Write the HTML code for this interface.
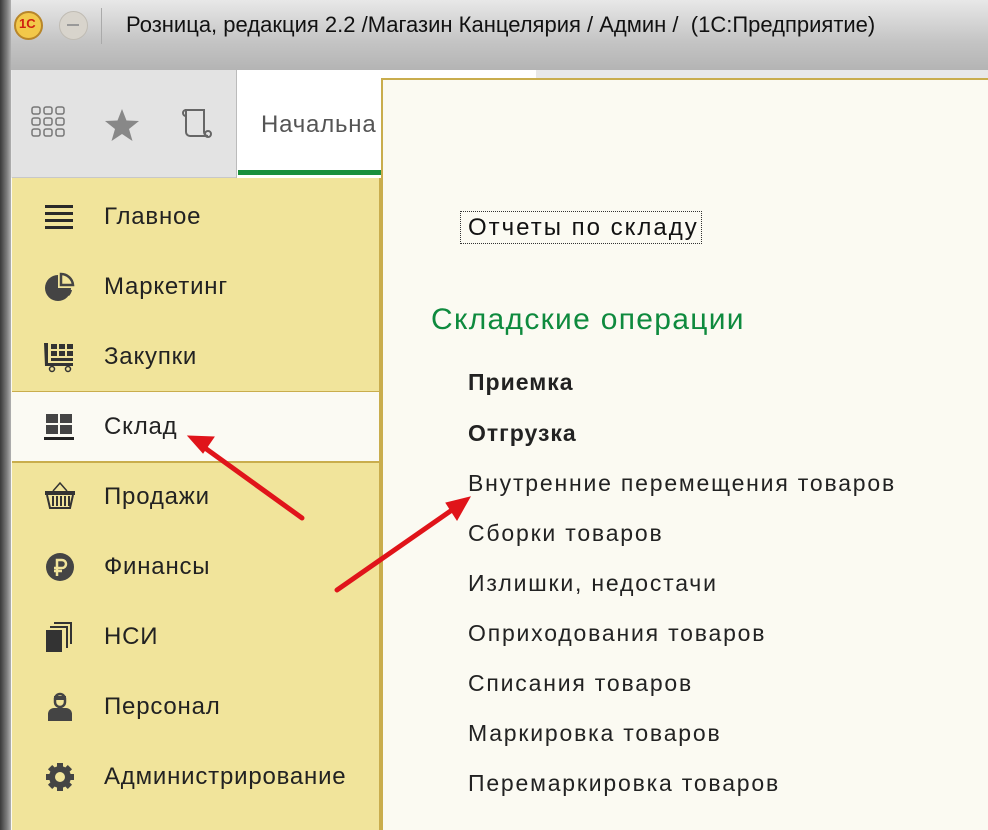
<!DOCTYPE html>
<html><head><meta charset="utf-8"><style>
*{margin:0;padding:0;box-sizing:border-box}
body{width:988px;height:830px;overflow:hidden;background:#fbfaf2;font-family:"Liberation Sans","DejaVu Sans",sans-serif;position:relative}
.abs{position:absolute}
#title{left:0;top:0;width:988px;height:70px;background:linear-gradient(#e8e8e8,#c4c4c4 60%,#b4b4b4)}
#ledge{left:0;top:0;width:11px;height:830px;background:linear-gradient(90deg,#3a3a3a,#7a7a7a 60%,#b0b0b0)}
.t{font-size:22px;color:#111;white-space:nowrap}
.side{left:12px;top:178px;width:369px;height:652px;background:#f1e49b;border-right:2px solid #c9ad4d}
.item{position:absolute;left:104px;font-size:24px;color:#222;white-space:nowrap;line-height:30px;letter-spacing:0.8px}
.r{position:absolute;left:468px;font-size:23px;color:#222;white-space:nowrap;line-height:28px;letter-spacing:1.8px}
</style></head><body>
<div class="abs" id="title"></div>
<div class="abs" id="ledge"></div>
<div class="abs" style="left:14px;top:11px;width:29px;height:29px;border-radius:50%;background:#f2c84a;border:2px solid #b8862a"></div>
<div class="abs" style="left:19px;top:16px;font-size:13px;font-weight:bold;color:#d02010">1С</div>
<div class="abs" style="left:59px;top:11px;width:29px;height:29px;border-radius:50%;background:#d8d4cc;border:1px solid #c0bcb4"></div>
<div class="abs" style="left:67px;top:24px;width:12px;height:2px;background:#999"></div>
<div class="abs" style="left:101px;top:8px;width:1px;height:36px;background:#aaa"></div>
<div class="abs t" style="left:126px;top:12px">Розница, редакция 2.2 /Магазин Канцелярия / Админ /&nbsp; (1С:Предприятие)</div>

<div class="abs" style="left:11px;top:70px;width:977px;height:108px;background:#e8e8e8"></div>
<div class="abs" style="left:12px;top:70px;width:224px;height:108px;background:#e3e3e3;border-bottom:1px solid #c8c8c8"></div>
<div class="abs" style="left:236px;top:70px;width:300px;height:108px;background:#fff;border-left:1px solid #bbb"></div>
<div class="abs" style="left:238px;top:170px;width:145px;height:5px;background:#1a8f3c"></div>
<div class="abs" style="left:261px;top:111px;font-size:24px;color:#555;letter-spacing:0.8px">Начальна</div>
<svg class="abs" style="left:30px;top:105px" width="40" height="36" viewBox="0 0 40 36" fill="none" stroke="#777" stroke-width="1.5">
<rect x="2" y="2" width="8" height="7" rx="2"/><rect x="14" y="2" width="8" height="7" rx="2"/><rect x="26" y="2" width="8" height="7" rx="2"/>
<rect x="2" y="13" width="8" height="7" rx="2"/><rect x="14" y="13" width="8" height="7" rx="2"/><rect x="26" y="13" width="8" height="7" rx="2"/>
<rect x="2" y="24" width="8" height="7" rx="2"/><rect x="14" y="24" width="8" height="7" rx="2"/><rect x="26" y="24" width="8" height="7" rx="2"/></svg>
<svg class="abs" style="left:104px;top:108px" width="36" height="34" viewBox="0 0 36 34"><polygon fill="#888" points="18,1 22.5,12.5 35,13 25,21 28.5,33 18,26 7.5,33 11,21 1,13 13.5,12.5"/></svg>
<svg class="abs" style="left:178px;top:106px" width="36" height="34" viewBox="0 0 36 34" fill="none" stroke="#666" stroke-width="2"><path d="M8 4 H26 V26 a4 4 0 0 0 4 4 H12 a4 4 0 0 1 -4 -4 Z M8 4 a3 3 0 0 0 -3 3 a3 3 0 0 0 3 3"/><circle cx="30" cy="28" r="3"/></svg>

<div class="abs side"></div>
<div class="abs" style="left:12px;top:391px;width:369px;height:72px;background:#fbfaf3;border-top:1px solid #c9ad4d;border-bottom:2px solid #c9ad4d;border-right:2px solid #c9ad4d"></div>

<svg class="abs" style="left:44px;top:204px" width="32" height="28"><g fill="#2a2a2a"><rect x="1" y="1" width="28" height="3"/><rect x="1" y="8" width="28" height="3"/><rect x="1" y="15" width="28" height="3"/><rect x="1" y="22" width="28" height="3"/></g></svg>
<svg class="abs" style="left:44px;top:272px" width="32" height="30" viewBox="0 0 32 30"><path fill="#444" d="M14 3 A13 13 0 1 0 27 16 H14 Z"/><path fill="none" stroke="#444" stroke-width="2.5" d="M17 2 A12 12 0 0 1 29 13 H17 Z"/><path fill="#444" d="M17 18 H28 A12 12 0 0 1 25 24 Z"/></svg>
<svg class="abs" style="left:43px;top:341px" width="34" height="32" viewBox="0 0 34 32"><g fill="#333"><path d="M1 2 H5 V22 H30 V25 H2 Z"/><rect x="8" y="3" width="6" height="5"/><rect x="16" y="3" width="6" height="5"/><rect x="24" y="3" width="6" height="5"/><rect x="8" y="10" width="6" height="5"/><rect x="16" y="10" width="6" height="5"/><rect x="24" y="10" width="6" height="5"/><rect x="8" y="17" width="22" height="3"/></g><circle cx="9" cy="28" r="2.5" fill="none" stroke="#333" stroke-width="1.5"/><circle cx="25" cy="28" r="2.5" fill="none" stroke="#333" stroke-width="1.5"/></svg>
<svg class="abs" style="left:44px;top:412px" width="32" height="30"><g fill="#444"><rect x="2" y="2" width="12" height="9"/><rect x="16" y="2" width="12" height="9"/><rect x="2" y="13" width="12" height="9"/><rect x="16" y="13" width="12" height="9"/></g><rect x="0" y="25" width="30" height="3" fill="#222"/></svg>
<svg class="abs" style="left:43px;top:481px" width="34" height="30" viewBox="0 0 34 30"><path fill="none" stroke="#333" stroke-width="1.5" d="M10 10 L17 2 L24 10"/><rect x="2" y="10" width="30" height="4" fill="#333"/><path fill="none" stroke="#333" stroke-width="2" d="M4 14 L7 27 H27 L30 14 M10 15 V25 M14 15 V25 M18 15 V25 M22 15 V25 M26 15 V25"/></svg>
<svg class="abs" style="left:45px;top:552px" width="30" height="30" viewBox="0 0 30 30"><circle cx="15" cy="15" r="14" fill="#444"/><path fill="none" stroke="#f1e49b" stroke-width="2.5" d="M12 24 V8 H17 a4 4 0 0 1 0 8 H9 M9 19 H17"/></svg>
<svg class="abs" style="left:46px;top:622px" width="28" height="32"><g fill="#333"><rect x="0" y="8" width="16" height="22"/><path d="M4 4 H22 V26 H20 V6 H4 Z"/><path d="M8 0 H26 V22 H24 V2 H8 Z"/></g></svg>
<svg class="abs" style="left:46px;top:692px" width="28" height="30" viewBox="0 0 28 30"><path fill="#444" d="M2 29 V22 a6 6 0 0 1 6 -6 H20 a6 6 0 0 1 6 6 V29 Z"/><path fill="none" stroke="#444" stroke-width="2.5" d="M9 7 a5 5 0 0 1 10 0 V10 a5 5 0 0 1 -10 0 Z"/><path fill="#444" d="M8 4 H20 V8 H8 Z"/></svg>
<svg class="abs" style="left:45px;top:762px" width="30" height="30" viewBox="0 0 30 30"><g fill="#444" transform="translate(15 15)"><circle r="11"/><rect x="-3" y="-14" width="6" height="28"/><rect x="-14" y="-3" width="28" height="6"/><rect x="-3" y="-14" width="6" height="28" transform="rotate(45)"/><rect x="-3" y="-14" width="6" height="28" transform="rotate(-45)"/></g><circle cx="15" cy="15" r="5" fill="#f1e49b"/></svg>

<div class="item" style="top:202px">Главное</div>
<div class="item" style="top:272px">Маркетинг</div>
<div class="item" style="top:342px">Закупки</div>
<div class="item" style="top:412px">Склад</div>
<div class="item" style="top:482px">Продажи</div>
<div class="item" style="top:552px">Финансы</div>
<div class="item" style="top:622px">НСИ</div>
<div class="item" style="top:692px">Персонал</div>
<div class="item" style="top:762px">Администрирование</div>

<div class="abs" style="left:381px;top:78px;width:607px;height:752px;background:#fbfaf2;border-top:2px solid #c9ad4d;border-left:2px solid #c9ad4d"></div>
<div class="abs" style="left:460px;top:211px;width:242px;height:33px;border:1.5px dotted #333"></div>
<div class="abs" style="left:468px;top:214px;font-size:24px;color:#111;letter-spacing:2px">Отчеты по складу</div>
<div class="abs" style="left:431px;top:303px;font-size:30px;color:#0e8a3e;letter-spacing:1.3px">Складские операции</div>
<div class="r" style="top:368px;font-weight:bold;letter-spacing:1px">Приемка</div>
<div class="r" style="top:419px;font-weight:bold;letter-spacing:1px">Отгрузка</div>
<div class="r" style="top:469px">Внутренние перемещения товаров</div>
<div class="r" style="top:519px">Сборки товаров</div>
<div class="r" style="top:569px">Излишки, недостачи</div>
<div class="r" style="top:619px">Оприходования товаров</div>
<div class="r" style="top:669px">Списания товаров</div>
<div class="r" style="top:719px">Маркировка товаров</div>
<div class="r" style="top:769px">Перемаркировка товаров</div>

<svg class="abs" style="left:0;top:0" width="988" height="830">
<g stroke="#e0141a" stroke-width="5" stroke-linecap="round" fill="#e0141a">
<line x1="302" y1="518" x2="205" y2="448"/>
<polygon stroke-width="1" points="188,436 214,437 203,453"/>
<line x1="337" y1="590" x2="452" y2="510"/>
<polygon stroke-width="1" points="470,497 457,520 446,503"/>
</g></svg>
</body></html>
